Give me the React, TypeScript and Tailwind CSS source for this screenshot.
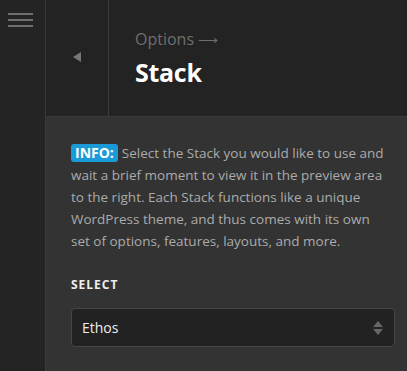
import React from "react";

const FONT = { fontFamily: '"Open Sans", "Noto Sans", sans-serif' };

function Hamburger() {
  return (
    <div className="flex flex-col gap-[4px] pt-[13px] pl-[8px]">
      <span className="block h-[2px] w-[25px] bg-[#6f6f6f]" />
      <span className="block h-[2px] w-[25px] bg-[#6f6f6f]" />
      <span className="block h-[2px] w-[25px] bg-[#6f6f6f]" />
    </div>
  );
}

function SelectArrows() {
  return (
    <svg width="10" height="16" viewBox="0 0 10 16" aria-hidden>
      <path d="M5 1 L10 7 L0 7 Z" fill="#666" />
      <path d="M0 9 L10 9 L5 15 Z" fill="#666" />
    </svg>
  );
}

export default function App() {
  return (
    <div className="flex h-[371px] w-[407px] overflow-hidden bg-[#242424]" style={FONT}>
      {/* Sidebar */}
      <aside className="w-[46px] shrink-0 border-r border-[#3a3a3a] bg-[#242424]">
        <Hamburger />
      </aside>

      <div className="flex min-w-0 flex-1 flex-col">
        {/* Header */}
        <header className="flex h-[117px] shrink-0 border-b border-[#3a3a3a] bg-[#232323]">
          <div className="flex w-[63px] shrink-0 items-center justify-center border-r border-[#3a3a3a] pb-[3px]">
            <svg width="8" height="10" viewBox="0 0 8 10" aria-hidden>
              <path d="M8 0 L8 10 L0 5 Z" fill="#777" />
            </svg>
          </div>
          <div className="flex flex-col pl-[26px] pt-[28px]">
            <span className="text-[16px] leading-[22px] text-[#6e6e6e]">
              Options <span className="text-[14px]">⟶</span>
            </span>
            <h1 className="mt-[5px] text-[25px] font-bold leading-[32px] tracking-[-0.3px] text-white">Stack</h1>
          </div>
        </header>

        {/* Content */}
        <main className="flex-1 bg-[#333333] pl-[25px] pr-[12px] pt-[25px]">
          <p className="pr-[6px] text-[13.5px] leading-[22px] text-[#ababab]">
            <span className="mr-[4px] inline-block rounded-[3px] bg-[#1a9ad6] px-[4px] text-[14px] font-bold leading-[18px] text-white">
              INFO:
            </span>
            Select the Stack you would like to use and wait a brief moment to view it in the preview area to the right. Each Stack functions like a unique WordPress theme, and thus comes with its own set of options, features, layouts, and more.
          </p>

          <div className="mt-[26px] text-[12px] font-bold uppercase leading-[14px] tracking-[1px] text-[#eeeeee]">
            Select
          </div>

          <div className="mt-[16px] flex h-[39px] items-center justify-between rounded-[4px] border border-[#464646] bg-[#222222] pl-[10px] pr-[11px]">
            <span className="text-[14px] text-[#eeeeee]">Ethos</span>
            <SelectArrows />
          </div>
        </main>
      </div>
    </div>
  );
}
